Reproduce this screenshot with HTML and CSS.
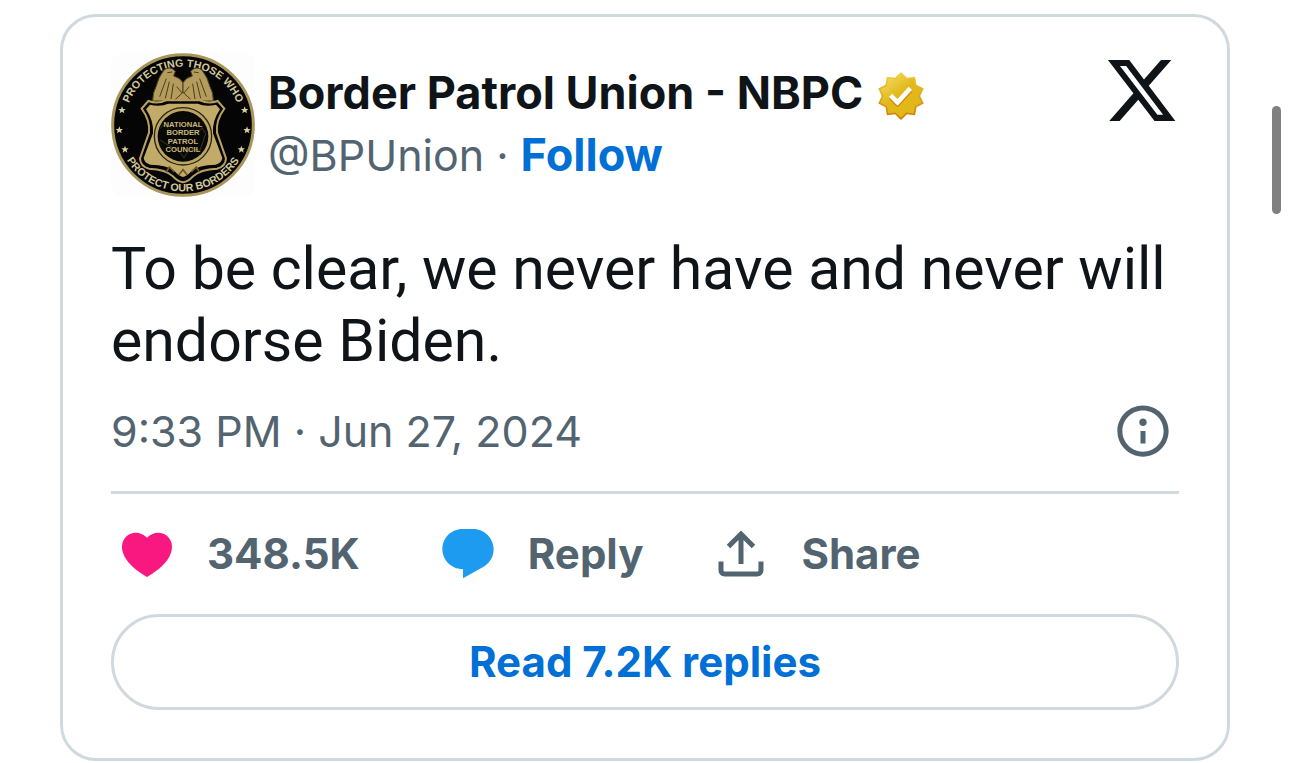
FILE: index.html
```html
<!DOCTYPE html>
<html lang="en">
<head>
    <meta charset="UTF-8">
    <meta name="viewport" content="width=device-width, initial-scale=1.0">
    <title>Border Patrol Union - NBPC on X</title>
    <link rel="stylesheet" href="styles.css">
</head>
<body>
    <article class="tweet">
        <header class="tweet-header">
            <a class="avatar" href="#" aria-label="Border Patrol Union - NBPC">
                <svg viewBox="33 39 432 432">
                    <defs>
                        <path id="arc-top" d="M74 255a175 175 0 0 1 350 0"/>
                        <path id="arc-bottom" d="M50 255a199 199 0 0 0 398 0"/>
                        <path id="star" d="M0-11l3 8h8l-6 5 2 8-7-5-7 5 2-8-6-5h8z"/>
                    </defs>
                    <rect x="33" y="39" width="432" height="432" rx="36" fill="#fdfdfd"/>
                    <circle cx="249" cy="255" r="211" fill="#050505" stroke="#a8955a" stroke-width="9"/>
                    <text class="seal-text"><textPath href="#arc-top" startOffset="50%">PROTECTING THOSE WHO</textPath></text>
                    <text class="seal-text"><textPath href="#arc-bottom" startOffset="50%">PROTECT OUR BORDERS</textPath></text>
                    <g fill="#d8cda0">
                        <use href="#star" x="66" y="210"/>
                        <use href="#star" x="58" y="270"/>
                        <use href="#star" x="75" y="328"/>
                        <use href="#star" x="434" y="210"/>
                        <use href="#star" x="441" y="270"/>
                        <use href="#star" x="424" y="328"/>
                    </g>
                    <!-- eagles -->
                    <g fill="#b39c5c" stroke="#4a3e1c" stroke-width="3">
                        <path d="M249 183h-91q0-26 10-43 7-28 24-50 18-14 34 4l-5 14q18 4 28 20z"/>
                        <path d="M249 183h91q0-26-10-43-7-28-24-50-18-14-34 4l5 14q-18 4-28 20z"/>
                        <path d="M179 170l20-54M196 175l12-50M213 178l7-47M319 170l-20-54M302 175l-12-50M285 178l-7-47M230 140l19 22 19-22" fill="none"/>
                        <path d="M223 181l26-24 26 24z"/>
                        <path d="M202 98l15-2M296 98l-15-2" fill="none"/>
                    </g>
                    <!-- shield -->
                    <path d="M145 183q28 10 53-2h102q25 12 53 2l20 23q-26 35-22 72l27 77q-1 25-27 31-51 2-72 23-13 15-30 18-17-3-30-18-21-21-72-23-26-6-27-31l27-77q4-37-22-72z" fill="#050505" stroke="#b8a061" stroke-width="6"/>
                    <path d="M150 194q30 8 55-3h88q25 11 55 3l12 14q-24 35-21 72l28 74q-2 15-20 20-52 0-73 20-12 14-25 17-13-3-25-17-21-20-73-20-18-5-20-20l28-74q3-37-21-72z" fill="#c2aa69"/>
                    <circle cx="249" cy="289" r="86" fill="#bca462" stroke="#292310" stroke-width="4"/>
                    <circle cx="249" cy="289" r="76" fill="#080806"/>
                    <path d="M180 266q12-20 25 0M180 300q20 14 42 25t30 29q10-23 28-27l20 4 17-50-10-17-15 12" fill="none" stroke="#3b3524" stroke-width="3"/>
                    <g class="seal-name">
                        <text x="249" y="260">NATIONAL</text>
                        <text x="249" y="286">BORDER</text>
                        <text x="249" y="311">PATROL</text>
                        <text x="249" y="336">COUNCIL</text>
                    </g>
                    <path d="M199 396l9-15 15 15M298 396l-9-15-15 15M237 404l12-15 12 15" fill="none" stroke="#6e5728" stroke-width="5"/>
                </svg>
            </a>
            <div class="author">
                <div class="author-row">
                    <a class="author-name" href="#">Border Patrol Union - NBPC</a>
                    <svg class="badge" viewBox="0 0 22 22" role="img" aria-label="Verified account">
                        <defs>
                            <linearGradient id="gold" x1="4" y1="2" x2="18" y2="20" gradientUnits="userSpaceOnUse">
                                <stop offset="0" stop-color="#f4e26e"/>
                                <stop offset=".45" stop-color="#e2b719"/>
                                <stop offset="1" stop-color="#e2b719"/>
                            </linearGradient>
                            <linearGradient id="gold-edge" x1="0" y1="2" x2="0" y2="20" gradientUnits="userSpaceOnUse">
                                <stop offset="0" stop-color="#f0d03c"/>
                                <stop offset="1" stop-color="#cb7b00"/>
                            </linearGradient>
                        </defs>
                        <path fill="url(#gold-edge)" d="M13.324 3.848L11 1.6 8.676 3.848l-3.201-.453-.559 3.184L2.06 8.095 3.48 11l-1.42 2.904 2.856 1.516.559 3.184 3.201-.452L11 20.4l2.324-2.248 3.201.452.559-3.184 2.856-1.516L18.52 11l1.42-2.905-2.856-1.516-.559-3.184z"/>
                        <path fill="url(#gold)" d="M13.101 4.533L11 2.5 8.899 4.533l-2.895-.41-.505 2.88-2.583 1.37L4.2 11l-1.284 2.627 2.583 1.37.505 2.88 2.895-.41L11 19.5l2.101-2.033 2.895.41.505-2.88 2.583-1.37L17.8 11l1.284-2.627-2.583-1.37-.505-2.88z"/>
                        <path fill="#d18800" d="M6.233 12.123l3.429 3.428 5.683-6.206V8.3l-5.7 5.3-2.2-2.6z"/>
                        <path fill="#fff" d="M6.233 11.423l3.429 3.428 5.683-6.206-1.347-1.247-4.4 4.795-2.072-2.072z"/>
                    </svg>
                </div>
                <div class="author-row">
                    <a class="handle" href="#">@BPUnion</a>
                    <span class="dot">·</span>
                    <a class="follow" href="#">Follow</a>
                </div>
            </div>
            <a class="x-logo" href="#" aria-label="View on X">
                <svg viewBox="0 0 24 24"><path d="M18.244 2.25h3.308l-7.227 8.26 8.502 11.24H16.17l-5.214-6.817L4.99 21.75H1.68l7.73-8.835L1.254 2.25H8.08l4.713 6.231zm-1.161 17.52h1.833L7.084 4.126H5.117z"/></svg>
            </a>
        </header>

        <p class="tweet-text">To be clear, we never have and never will endorse Biden.</p>

        <div class="meta">
            <a class="time" href="#">9:33 PM · Jun 27, 2024</a>
            <a class="info" href="#" aria-label="Ads info and privacy">
                <svg class="icon" viewBox="0 0 24 24"><path d="M13.5 8.5c0 .83-.67 1.5-1.5 1.5s-1.5-.67-1.5-1.5S11.17 7 12 7s1.5.67 1.5 1.5zM13 17v-5h-2v5h2zm-1 5.25c5.66 0 10.25-4.59 10.25-10.25S17.66 1.75 12 1.75 1.75 6.34 1.75 12 6.34 22.25 12 22.25zM20.25 12c0 4.56-3.69 8.25-8.25 8.25S3.75 16.56 3.75 12 7.44 3.75 12 3.75s8.25 3.69 8.25 8.25z"/></svg>
            </a>
        </div>

        <div class="actions">
            <a class="action like" href="#">
                <svg class="icon" viewBox="0 0 24 24"><path d="M20.884 13.19c-1.351 2.48-4.001 5.12-8.379 7.67l-.503.3-.504-.3c-4.379-2.55-7.029-5.19-8.382-7.67-1.36-2.5-1.41-4.86-.514-6.67.887-1.79 2.647-2.91 4.601-3.01 1.651-.09 3.368.56 4.798 2.01 1.429-1.45 3.146-2.1 4.796-2.01 1.954.1 3.714 1.22 4.601 3.01.896 1.81.846 4.17-.514 6.67z"/></svg>
                <span>348.5K</span>
            </a>
            <a class="action reply" href="#">
                <svg class="icon" viewBox="0 0 24 24"><path d="M1.751 10c0-4.42 3.584-8 8.005-8h4.366c4.49 0 8.129 3.64 8.129 8.13 0 2.96-1.607 5.68-4.196 7.11l-8.054 4.46v-3.69h-.067c-4.49.1-8.183-3.51-8.183-8.01z"/></svg>
                <span>Reply</span>
            </a>
            <button class="action share" type="button">
                <svg class="icon" viewBox="0 0 24 24"><path d="M12 2.59l5.7 5.7-1.41 1.42L13 6.41V16h-2V6.41l-3.3 3.3-1.41-1.42L12 2.59zM21 15l-.02 3.51c0 1.38-1.12 2.49-2.5 2.49H5.5C4.11 21 3 19.88 3 18.5V15h2v3.5c0 .28.22.5.5.5h12.98c.28 0 .5-.22.5-.5L19 15h2z"/></svg>
                <span>Share</span>
            </button>
        </div>

        <a class="replies" href="#">Read 7.2K replies</a>
    </article>
    <div class="scroll-thumb"></div>
</body>
</html>
```

FILE: styles.css
```css
* {
    box-sizing: border-box;
}

body {
    margin: 0;
    padding: 14px 60px 2px;
    background-color: #fff;
    color: #0f1419;
    font-family: Inter, "Liberation Sans", sans-serif;
}

a {
    color: inherit;
    text-decoration: none;
}

svg {
    display: block;
    fill: currentColor;
}

.tweet {
    padding: 36px 48px 48px;
    border: 3px solid #cfd9de;
    border-radius: 36px;
}

.tweet-header {
    display: flex;
    align-items: flex-start;
}

.avatar {
    width: 144px;
    height: 144px;
    margin-right: 13px;
    flex-shrink: 0;
}

.seal-text {
    font: bold 32px "Liberation Sans", sans-serif;
    text-anchor: middle;
    fill: #d2c79d;
}

.seal-name {
    font: bold 23px "Liberation Sans", sans-serif;
    text-anchor: middle;
    fill: #c8b67c;
}

.author {
    flex: 1;
    padding-top: 9px;
    font-size: 45px;
    line-height: 62px;
    white-space: nowrap;
}

.author-row {
    display: flex;
    align-items: center;
    height: 62px;
}

.author-name,
.follow {
    font-weight: 700;
}

.badge {
    width: 56px;
    height: 56px;
    margin: 6px 0 0 10px;
}

.handle,
.dot {
    color: #536471;
    font-size: 43px;
}

.dot {
    margin: 0 12px;
}

.follow {
    color: #006fd6;
}

.x-logo svg {
    width: 75px;
    height: 75px;
}

.tweet-text {
    margin: 36px 0 24px;
    font-family: Roboto, "Liberation Sans", sans-serif;
    font-size: 59px;
    line-height: 72px;
}

.meta {
    display: flex;
    align-items: center;
    justify-content: space-between;
    padding: 0 6px 30px 0;
    border-bottom: 3px solid #cfd9de;
    color: #536471;
    font-size: 43px;
    line-height: 60px;
}

.icon {
    width: 60px;
    height: 60px;
}

.actions {
    display: flex;
    gap: 68px;
    padding: 30px 6px;
}

.action {
    display: flex;
    align-items: center;
    gap: 30px;
    padding: 0;
    border: none;
    background: none;
    color: #536471;
    font-family: inherit;
    font-size: 42px;
    font-weight: 700;
    line-height: 60px;
    cursor: pointer;
}

.like {
    padding-right: 10px;
}

.like .icon {
    color: #f91880;
}

.reply .icon {
    color: #1d9bf0;
}

.replies {
    display: block;
    border: 3px solid #cfd9de;
    border-radius: 48px;
    color: #006fd6;
    font-size: 42px;
    font-weight: 700;
    line-height: 90px;
    text-align: center;
}

.scroll-thumb {
    position: fixed;
    top: 106px;
    right: 9px;
    width: 9px;
    height: 108px;
    border-radius: 5px;
    background-color: #808080;
}
```
